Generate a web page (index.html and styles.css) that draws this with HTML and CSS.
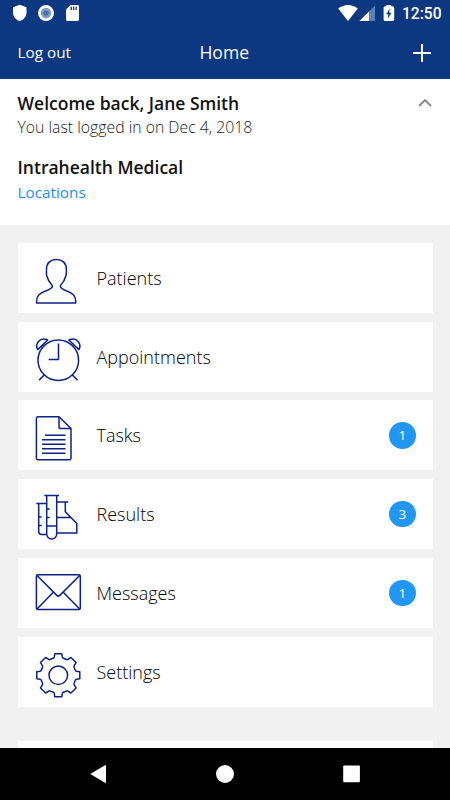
FILE: index.html
```
<!DOCTYPE html>
<html lang="en">
<head>
    <meta charset="UTF-8"/>
    <title>Home</title>
    <link rel="stylesheet" href="styles.css">
</head>
<body>
<div class="screen">
    <header class="header">
        <div class="status">
            <svg class="status_left" width="80" height="26" viewBox="0 0 80 26">
                <path d="M19.7 4.7L26.5 7.2V12.5C26.5 16.5 24 19.7 19.7 21.3C15.4 19.7 13 16.5 13 12.5V7.2Z" fill="#fff"/>
                <circle cx="46" cy="13.1" r="8" fill="#fff"/>
                <circle cx="46" cy="13.1" r="5.3" fill="#7f9bc6"/>
                <circle cx="46" cy="13.1" r="2.7" fill="#4a70aa"/>
                <path d="M70.5 5H77.6Q79 5 79 6.4V19.6Q79 21 77.6 21H67.4Q66 21 66 19.6V9.5Z" fill="#fff"/>
                <path d="M71.3 6.7V10M73.7 6.7V10M76.2 6.7V10" stroke="#0b3880" stroke-width="1.3"/>
            </svg>
            <svg class="status_right" width="60" height="26" viewBox="0 0 60 26">
                <path d="M.2 8.5C6 3.7 14 3.7 19.8 8.5L10 21Z" fill="#fff"/>
                <path d="M37 5.5V21H21.5Z" fill="#5f80b3"/>
                <path d="M31 11.5V21H21.5Z" fill="#fff"/>
                <path d="M48.3 4.9H53.3V6.2H54.6Q56.2 6.2 56.2 7.8V19.5Q56.2 21 54.6 21H47.2Q45.6 21 45.6 19.5V7.8Q45.6 6.2 47.2 6.2H48.3Z" fill="#fff"/>
                <path d="M51.7 8.5L48.2 14.2H50.4L49.8 18.8L53.5 12.8H51.2Z" fill="#0b3880"/>
            </svg>
            <span class="status_time">12:50</span>
        </div>
        <div class="navbar">
            <span class="navbar_logout">Log out</span>
            <h1>Home</h1>
            <svg class="navbar_add" width="18" height="18" viewBox="0 0 18 18">
                <path d="M9 0V18M0 9H18" stroke="#fff" stroke-width="2"/>
            </svg>
        </div>
    </header>

    <section class="profile">
        <div class="profile_head">
            <h2>Welcome back, Jane Smith</h2>
            <svg width="14" height="9" viewBox="0 0 14 9">
                <path d="M1 7L7 1.2L13 7" fill="none" stroke="#8b8b8b" stroke-width="2"/>
            </svg>
        </div>
        <p class="profile_login">You last logged in on Dec 4, 2018</p>
        <h2 class="profile_clinic">Intrahealth Medical</h2>
        <a class="profile_link">Locations</a>
    </section>

    <main class="menu">
        <div class="item">
            <svg class="icon" viewBox="0 0 48 52">
                <path d="M2.6 50V48C2.6 42.500 5.500 40.500 11 38.300C16.500 36.200 20.200 34 17.500 31.500C15 29 13.800 26.500 13.300 24C12 22.500 12.500 19.500 12.500 16.500C12.300 10 16.500 6.600 22.300 6.600C28.300 6.600 32.600 10 32.400 16.500C32.300 19.500 32.700 22.500 31.400 24C30.800 26.500 29.700 29 27.200 31.500C24.700 34 28.200 36.200 33.400 38.300C38.800 40.500 41.700 42.500 41.700 48V50Z"/>
            </svg>
            <span class="item_name">Patients</span>
        </div>
        <div class="item">
            <svg class="icon" viewBox="0 0 48 52">
                <circle cx="24.3" cy="28.2" r="20.3"/>
                <path d="M24.5 11.6V27.5H14.7M10.3 42.9L5 48.2M38.3 42.9L43.6 48.2"/>
                <path d="M3.7 17.6C.6 12 5.5 4.5 13.7 8ZM44.9 17.6C48 12 43.1 4.5 34.9 8Z"/>
            </svg>
            <span class="item_name">Appointments</span>
        </div>
        <div class="item">
            <svg class="icon" viewBox="0 0 48 52">
                <path d="M4 6.8H25L37 18.5V48.2Q37 49.8 35.4 49.8H4Q2.4 49.8 2.4 48.2V8.4Q2.4 6.8 4 6.8Z"/>
                <path d="M25 6.8V16.7Q25 18.5 26.8 18.5H37"/>
                <path d="M11 25.2H31.5M8 29.8H31.5M8 34.2H31.5M8 38.8H31.5M8 43.2H31.5"/>
            </svg>
            <span class="item_name">Tasks</span>
            <span class="badge">1</span>
        </div>
        <div class="item">
            <svg class="icon" viewBox="0 0 48 52">
                <path d="M10.3 6.4H25M12.7 6.4V45A5 5 0 0 0 22.7 45V6.4M12.7 37H22.7M12.7 20H15.7M12.7 28.4H15.7"/>
                <path d="M2.3 14.4H12.7M4.7 14.4V42.5Q4.7 45.4 7.6 45.4H12.7M4.7 28H7.7M4.7 36.4H7.7"/>
                <path d="M22.7 13H34.3M31.3 13V22.7L42.8 34.5V44H22.7M22.7 28.4H36.5"/>
            </svg>
            <span class="item_name">Results</span>
            <span class="badge">3</span>
        </div>
        <div class="item">
            <svg class="icon" viewBox="0 0 48 52">
                <rect x="2.4" y="6.7" width="43.9" height="34.9" rx="1.5"/>
                <path d="M2.8 7.2L22.8 27.4Q24.3 28.9 25.8 27.4L45.9 7.2M2.8 41.2L19.3 24.3M45.9 41.2L29.3 24.3"/>
            </svg>
            <span class="item_name">Messages</span>
            <span class="badge">1</span>
        </div>
        <div class="item">
            <svg class="icon" viewBox="0 0 48 52">
                <g transform="translate(24.3 28.25)">
                    <circle r="9.3"/>
                    <path d="M-3.5 -21.5H3.5L4 -18.3Q4.2 -17.3 5 -17L8.3 -15.7Q9 -15.4 9.8 -16L12.7 -17.8L17.8 -12.7L16 -9.8Q15.4 -9 15.7 -8.3L17 -5Q17.3 -4.2 18.3 -4L21.5 -3.5V3.5L18.3 4Q17.3 4.2 17 5L15.7 8.3Q15.4 9 16 9.8L17.8 12.7L12.7 17.8L9.8 16Q9 15.4 8.3 15.7L5 17Q4.2 17.3 4 18.3L3.5 21.5H-3.5L-4 18.3Q-4.2 17.3 -5 17L-8.3 15.7Q-9 15.4 -9.8 16L-12.7 17.8L-17.8 12.7L-16 9.8Q-15.4 9 -15.7 8.3L-17 5Q-17.3 4.2 -18.3 4L-21.5 3.5V-3.5L-18.3 -4Q-17.3 -4.2 -17 -5L-15.7 -8.3Q-15.4 -9 -16 -9.8L-17.8 -12.7L-12.7 -17.8L-9.8 -16Q-9 -15.4 -8.3 -15.7L-5 -17Q-4.2 -17.3 -4 -18.3Z"/>
                </g>
            </svg>
            <span class="item_name">Settings</span>
        </div>
        <div class="item item__next"></div>
    </main>

    <footer class="system">
        <svg width="450" height="52" viewBox="0 0 450 52">
            <path d="M90.3 26L105 17.2Q106 16.7 106 17.8V34.2Q106 35.3 105 34.8Z" fill="#fff"/>
            <circle cx="225" cy="26" r="9" fill="#fff"/>
            <rect x="343.2" y="17.5" width="16.7" height="16.7" rx="1" fill="#fff"/>
        </svg>
    </footer>
</div>
</body>
</html>
```
FILE: styles.css
```
body {
    margin: 0;
    font-family: "Open Sans", sans-serif;
    background-color: #f1f1f1;
}

h1, h2, p {
    margin: 0;
}

.screen {
    display: flex;
    flex-direction: column;
    height: 800px;
    overflow: hidden;
}

.header {
    flex: none;
    box-sizing: border-box;
    height: 78.5px;
    color: #fff;
    background-color: #0b3880;
}

.status {
    display: flex;
    height: 26px;
}

.status_right {
    margin-left: auto;
}

.status_time {
    width: 52px;
    padding-left: 4px;
    box-sizing: border-box;
    font: 500 15.6px/28px Roboto, sans-serif;
}

.navbar {
    display: grid;
    grid-template-columns: 1fr auto 1fr;
    align-items: center;
    height: 52px;
    padding: 0 19px 0 17.5px;
}

.navbar_logout {
    font-size: 15.3px;
}

.navbar h1 {
    font-size: 17.6px;
    font-weight: 400;
}

.navbar_add {
    justify-self: end;
    margin-top: 2px;
}

.profile {
    flex: none;
    box-sizing: border-box;
    height: 146.5px;
    padding: 12px 18px 0 17.5px;
    background-color: #fff;
}

.profile_head {
    display: flex;
    justify-content: space-between;
    align-items: center;
}

.profile h2 {
    font-size: 17.5px;
    font-weight: 600;
    line-height: 25px;
    color: #111;
}

.profile_login {
    font-size: 15.8px;
    font-weight: 300;
    line-height: 23px;
    color: #222;
}

.profile .profile_clinic {
    margin-top: 16px;
}

.profile_link {
    display: block;
    font-size: 15.3px;
    line-height: 25px;
    color: #1e90f5;
}

.menu {
    display: flex;
    flex-direction: column;
    flex: 1;
    gap: 8.75px;
    min-height: 0;
    padding: 17.8px 17px 0 17.5px;
    overflow: hidden;
}

.item {
    display: flex;
    flex: none;
    align-items: center;
    box-sizing: border-box;
    height: 70px;
    padding: 0 17.5px 0 16.5px;
    background-color: #fff;
}

.item__next {
    margin-top: 26px;
}

.icon {
    width: 48px;
    height: 52px;
    margin-top: 2px;
    fill: none;
    stroke: #0c2284;
    stroke-width: 1.5px;
    stroke-linejoin: round;
}

.item_name {
    margin-left: 14.5px;
    font-size: 18px;
    font-weight: 300;
    color: #000;
}

.badge {
    width: 26.5px;
    height: 26.5px;
    margin-left: auto;
    border-radius: 50%;
    font-size: 13.5px;
    line-height: 27.5px;
    text-align: center;
    color: #fff;
    background-color: #2196f3;
}

.system {
    flex: none;
    height: 52.5px;
    background-color: #000;
}

.system svg {
    display: block;
}
```
